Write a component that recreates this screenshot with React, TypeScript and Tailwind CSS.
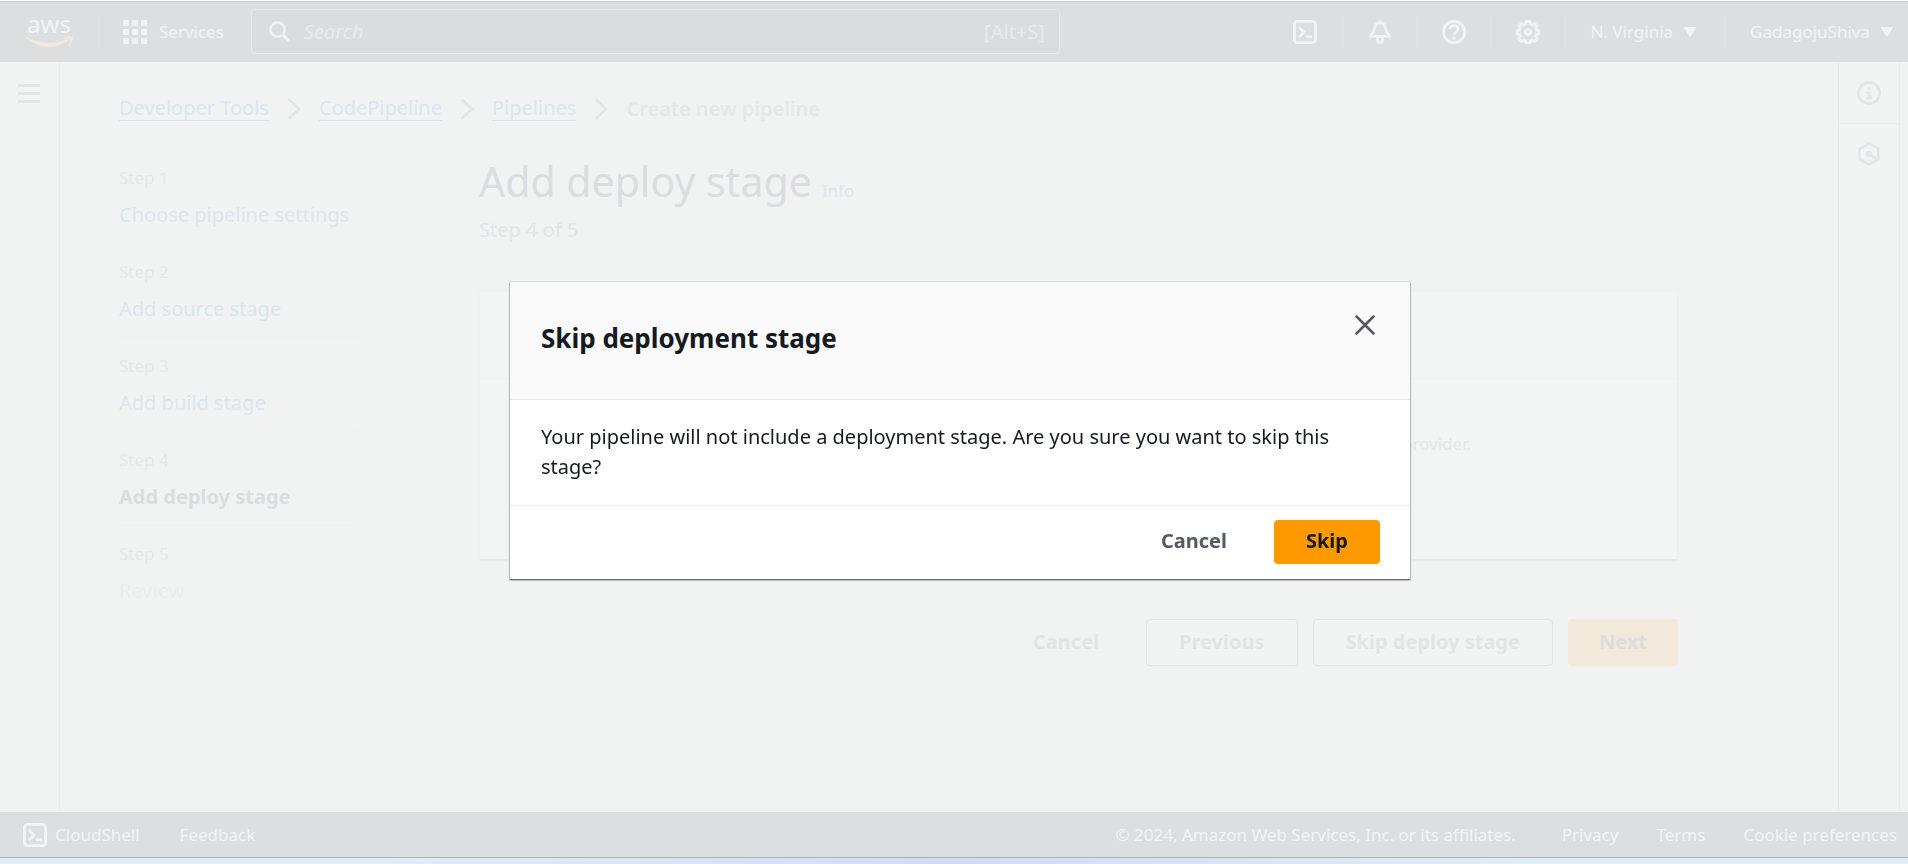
import React from "react";

const steps = [
  { label: "Step 1", title: "Choose pipeline settings", kind: "link" },
  { label: "Step 2", title: "Add source stage", kind: "link" },
  { label: "Step 3", title: "Add build stage", kind: "link" },
  { label: "Step 4", title: "Add deploy stage", kind: "current" },
  { label: "Step 5", title: "Review", kind: "disabled" },
];

function AwsLogo() {
  return (
    <a href="#home" aria-label="AWS home" className="flex w-12 flex-col items-center text-[24px] leading-4">
      <span>aws</span>
      <svg viewBox="0 0 48 12" className="mt-1 h-3 w-12" fill="#f3e9db" aria-hidden="true">
        <path d="M0.6 1.6C0 1 .8.6 1.6 1.1 13.5 8 30 8.600 42 3.200c1.600-.7 2.400.6 1.200 1.600C31.500 13.300 12.500 13.300.6 1.600Z" />
        <path d="M38.600 1.500C41 .1 46.600-.4 47.400.8c.8 1.300-.3 6.400-3 8.800-.5.5-1 .2-.7-.4.8-1.900 1.800-5 1.200-5.900-.7-.9-3.800-.7-5.900-.4-.7.1-1-.9-.4-1.400Z" />
      </svg>
    </a>
  );
}

function TerminalIcon() {
  return (
    <svg viewBox="0 0 24 24" className="size-6" fill="none" stroke="currentColor" strokeWidth="2.800" aria-hidden="true">
      <rect x="1.400" y="1.400" width="21.200" height="21.200" rx="3" />
      <path d="M6 7l5 5.200L6 17.400" />
      <path d="M13 16.700h6" />
    </svg>
  );
}

function BellIcon() {
  return (
    <svg viewBox="0 0 24 24" className="size-6" fill="none" stroke="currentColor" strokeWidth="2.700" strokeLinejoin="round" aria-hidden="true">
      <path d="M12 0v3" />
      <path d="M2 16.400C5.600 13 5.900 12 6.400 9 7 5 9 2.900 12 2.900S17 5 17.600 9c.5 3 .8 4 4.400 7.400Z" />
      <path d="M9.400 17v3a2.600 2.600 0 0 0 5.200 0V17" />
    </svg>
  );
}

function HelpIcon() {
  return (
    <svg viewBox="0 0 24 24" className="size-6" fill="none" stroke="currentColor" strokeWidth="2.700" aria-hidden="true">
      <circle cx="12" cy="12" r="10.600" />
      <path d="M8 9.200C8.200 6.800 9.800 5.600 12 5.600s4 1.300 4 3.500c0 2.900-4 3-4 6.200" />
      <path d="M12 16.800v2.700" strokeWidth="3" />
    </svg>
  );
}

function GearIcon() {
  return (
    <svg viewBox="0 0 24 24" className="size-6" fill="none" stroke="currentColor" strokeWidth="2.800" strokeLinejoin="round" aria-hidden="true">
      <path d="M10 1.500h4l.6 2.600 1.600.7 2.300-1.500 2.600 2.700-1.500 2.200.7 1.700 2.500.6v3.700l-2.500.6-.7 1.700 1.500 2.200-2.700 2.600-2.200-1.400-1.600.7-.6 2.500h-4l-.6-2.500-1.600-.7-2.200 1.400-2.700-2.600 1.500-2.200-.7-1.700-2.500-.6v-3.700l2.500-.6.7-1.700-1.500-2.200 2.600-2.700 2.300 1.500 1.600-.7Z" />
      <circle cx="12" cy="12" r="2.800" />
    </svg>
  );
}

function Caret() {
  return (
    <svg viewBox="0 0 12 10" className="h-[10px] w-3" fill="currentColor" aria-hidden="true">
      <path d="M.5 0h11c.4 0 .6.4.4.7L6.600 9.600c-.3.500-.9.500-1.200 0L.1.700C-.1.400.1 0 .5 0Z" />
    </svg>
  );
}

function Divider() {
  return <span className="h-[34px] w-px shrink-0 bg-[#e0e2e3]" />;
}

function Header() {
  return (
    <header className="flex h-[62px] shrink-0 items-center border-t border-white bg-[#dcdfe0] text-[17px] text-[#f2f4f4] shadow-[inset_0_1px_0_#c8cbcc]">
      <div className="flex flex-1 items-center pl-[25px]">
        <AwsLogo />
        <div className="flex pl-[25px] pr-6">
          <Divider />
        </div>
        <button type="button" className="flex items-center gap-3">
          <svg viewBox="0 0 24 24" className="size-6" fill="currentColor" aria-hidden="true">
            {[0, 9, 18].map((y) => [0, 9, 18].map((x) => <rect key={`${x}-${y}`} x={x} y={y} width="6" height="6" rx="1.200" />))}
          </svg>
          Services
        </button>
        <div className="ml-[27px] flex h-[45px] max-w-[809px] flex-1 items-center rounded-sm border border-[#e6e9e9] bg-[#dbdcde] pr-[14px] pl-[17px] text-[20px] text-[#e8eaea]">
          <svg viewBox="0 0 22 22" className="size-[21px] shrink-0 text-[#f1f3f3]" fill="none" stroke="currentColor" strokeWidth="2.600" aria-hidden="true">
            <circle cx="9" cy="9" r="7.500" />
            <path d="M14.200 14.200l6.300 6.600" strokeWidth="3" />
          </svg>
          <input aria-label="Search" placeholder="Search" className="ml-[14px] min-w-0 flex-1 bg-transparent italic outline-none placeholder:text-[#e8eaea]" />
          <span>[Alt+S]</span>
        </div>
      </div>
      <nav aria-label="Account" className="flex items-center pr-[15px]">
        <button type="button" aria-label="CloudShell" className="px-[25px]"><TerminalIcon /></button>
        <Divider />
        <button type="button" aria-label="Notifications" className="px-[25px]"><BellIcon /></button>
        <Divider />
        <button type="button" aria-label="Help" className="px-6"><HelpIcon /></button>
        <Divider />
        <button type="button" aria-label="Settings" className="px-[25px]"><GearIcon /></button>
        <Divider />
        <button type="button" className="flex items-center gap-[11px] pl-6 pr-7">N. Virginia <Caret /></button>
        <Divider />
        <button type="button" className="flex items-center gap-[11px] pl-[25px]">GadagojuShiva <Caret /></button>
      </nav>
    </header>
  );
}

function Chevron() {
  return (
    <svg viewBox="0 0 14 22" className="h-[22px] w-[14px] shrink-0 text-[#e3e5e6]" fill="none" stroke="currentColor" strokeWidth="2.600" aria-hidden="true">
      <path d="M1.500 1l10.500 10L1.500 21" />
    </svg>
  );
}

function Breadcrumbs() {
  return (
    <nav aria-label="Breadcrumb" className="flex items-center gap-[18px] text-[20px] leading-[24px]">
      {["Developer Tools", "CodePipeline", "Pipelines"].map((name) => (
        <React.Fragment key={name}>
          <a href="#crumb" className="border-b border-[#d5e4ee] text-[#dbe6ee]">{name}</a>
          <Chevron />
        </React.Fragment>
      ))}
      <span className="font-semibold text-[#e5e7e8]">Create new pipeline</span>
    </nav>
  );
}

const titleStyles: Record<string, string> = {
  link: "text-[#dbe6ee]",
  current: "font-bold text-[#dcdddf]",
  disabled: "text-[#ebeded]",
};

function StepList() {
  return (
    <ol className="w-[240px] shrink-0 divide-y divide-[#eff1f1]">
      {steps.map((s) => (
        <li key={s.label} className="flex h-[94px] flex-col gap-[10px] pt-4 whitespace-nowrap">
          <span className="text-[17px] leading-6 text-[#e5e7e8]">{s.label}</span>
          <span className={`text-[20px] leading-[30px] ${titleStyles[s.kind]}`}>
            {s.kind === "link" ? <a href="#step">{s.title}</a> : s.title}
          </span>
        </li>
      ))}
    </ol>
  );
}

const outlineButton = "h-[47px] rounded-sm border border-[#e3e5e6] bg-[#f2f4f4] px-8";

function Workspace() {
  return (
    <main className="min-w-0 flex-1 pt-[34px] pr-40 pl-[59px]">
      <Breadcrumbs />
      <div className="mt-[29px] flex gap-[120px]">
        <StepList />
        <section className="min-w-0 flex-1">
          <div className="flex items-baseline gap-[10px] pt-[6px]">
            <h1 className="text-[41px] leading-[50px] text-[#dcdddf]">Add deploy stage</h1>
            <a href="#info" className="text-[17px] text-[#dbe6ee]">Info</a>
          </div>
          <p className="mt-[9px] text-[20px] leading-[30px] text-[#e3e5e6]">Step 4 of 5</p>
          <div className="mt-[46px] border border-[#eff1f1] border-b-[#e8eaea] bg-[#f3f4f4] shadow-[0_1px_1px_#eaecec]">
            <div className="h-[87px] border-b border-[#f0f2f2]" />
            <p className="h-[180px] pt-[52px] pr-[206px] text-right text-[17px] leading-[26px] text-[#e5e7e8]">provider.</p>
          </div>
          <div className="mt-[59px] flex justify-end gap-[15px] text-[20px] font-bold text-[#e2e4e5]">
            <button type="button" className="px-8 pb-[2px]">Cancel</button>
            <button type="button" className={`${outlineButton} pb-[2px]`}>Previous</button>
            <button type="button" className={`${outlineButton} pb-[2px]`}>Skip deploy stage</button>
            <button type="button" className="h-[47px] rounded-sm bg-[#f3e9db] px-[31px] pb-[2px] text-[#dcdddf]">Next</button>
          </div>
        </section>
      </div>
    </main>
  );
}

function RightRail() {
  return (
    <aside aria-label="Help panels" className="mr-[8px] flex w-[62px] shrink-0 flex-col border-x border-[#eaecec] bg-[#f2f4f4] text-[#e3e5e6]">
      <button type="button" aria-label="Info" className="flex h-[62px] items-center justify-center border-b border-[#eaecec]">
        <svg viewBox="0 0 24 24" className="size-6" fill="none" stroke="currentColor" strokeWidth="2.600" aria-hidden="true">
          <circle cx="12" cy="12" r="10.600" />
          <path d="M12 6.200v2.800" strokeWidth="3" />
          <path d="M9 11.600h3.300v5.600M9 17.300h6" strokeWidth="2.400" />
        </svg>
      </button>
      <button type="button" aria-label="Tools" className="flex h-[60px] items-center justify-center">
        <svg viewBox="0 0 24 24" className="size-6" fill="none" stroke="currentColor" strokeWidth="2.600" aria-hidden="true">
          <path d="M12 1.600l9.400 5.200v10.400L12 22.400l-9.400-5.200V6.800Z" />
          <circle cx="12" cy="12" r="3.200" fill="currentColor" stroke="none" />
          <path d="M12.500 12.500l8 4.500" />
        </svg>
      </button>
    </aside>
  );
}

function Footer() {
  return (
    <footer className="flex h-[46px] shrink-0 items-center justify-between border-b border-[#a9b5bd] bg-[#dcdfe0] pr-[11px] pl-[23px] text-[17px] text-[#f2f4f4]">
      <div className="flex items-center gap-10">
        <button type="button" className="flex items-center gap-2"><TerminalIcon /> CloudShell</button>
        <a href="#feedback">Feedback</a>
      </div>
      <div className="flex items-center gap-[38px]">
        <span className="mr-2">© 2024, Amazon Web Services, Inc. or its affiliates.</span>
        <a href="#privacy">Privacy</a>
        <a href="#terms">Terms</a>
        <a href="#cookies">Cookie preferences</a>
      </div>
    </footer>
  );
}

function SkipDialog() {
  return (
    <div className="fixed inset-0 flex items-center justify-center pb-1 pl-3">
      <div role="dialog" aria-modal="true" aria-labelledby="dialog-title" className="w-full max-w-[900px] bg-white shadow-[0_1px_1px_#5f6f78,0_1px_2px_#8b979d,0_0_1px_#8b979d]">
        <div className="flex h-[118px] items-start justify-between border-b border-[#e9ebed] bg-[#fafafa] pt-[33px] pr-[35px] pl-[31px]">
          <h2 id="dialog-title" className="pt-1 text-[26px] leading-[38px] font-bold text-[#16191f]">Skip deployment stage</h2>
          <button type="button" aria-label="Close" className="text-[#545b64]">
            <svg viewBox="0 0 20 20" className="size-5" fill="none" stroke="currentColor" strokeWidth="2.500" strokeLinecap="round" aria-hidden="true">
              <path d="M1.500 1.500l17 17M18.500 1.500l-17 17" />
            </svg>
          </button>
        </div>
        <p className="px-[31px] pt-[22px] pb-[23px] text-[20px] leading-[30px] text-[#16191f]">
          Your pipeline will not include a deployment stage. Are you sure you want to skip this stage?
        </p>
        <div className="flex justify-end gap-[15px] border-t border-[#e9ebed] px-[30px] pt-[14px] pb-[15px] text-[20px] font-bold">
          <button type="button" className="px-8 pb-[2px] text-[#545b64]">Cancel</button>
          <button type="button" className="h-[44px] rounded-sm bg-[#ff9900] px-8 pb-[2px] text-[#16191f]">Skip</button>
        </div>
      </div>
    </div>
  );
}

export default function App() {
  return (
    <div className="flex min-h-screen flex-col bg-[#f1f3f3] font-['Noto_Sans',sans-serif]">
      <Header />
      <div className="flex flex-1">
        <aside aria-label="Navigation" className="w-[60px] shrink-0 border-r border-[#eaecec] bg-[#f2f4f4] pt-[22px] pl-[18px]">
          <button type="button" aria-label="Open navigation" className="flex w-[22px] flex-col gap-[5px]">
            <span className="h-[3px] w-full bg-[#e3e5e6]" />
            <span className="h-[3px] w-full bg-[#e3e5e6]" />
            <span className="h-[3px] w-full bg-[#e3e5e6]" />
          </button>
        </aside>
        <Workspace />
        <RightRail />
      </div>
      <Footer />
      <div className="h-[6px] shrink-0 bg-linear-to-r from-[#e1ecf7] from-20% via-[#d5daf3] via-50% to-[#dfedf5] to-80%" />
      <SkipDialog />
    </div>
  );
}
